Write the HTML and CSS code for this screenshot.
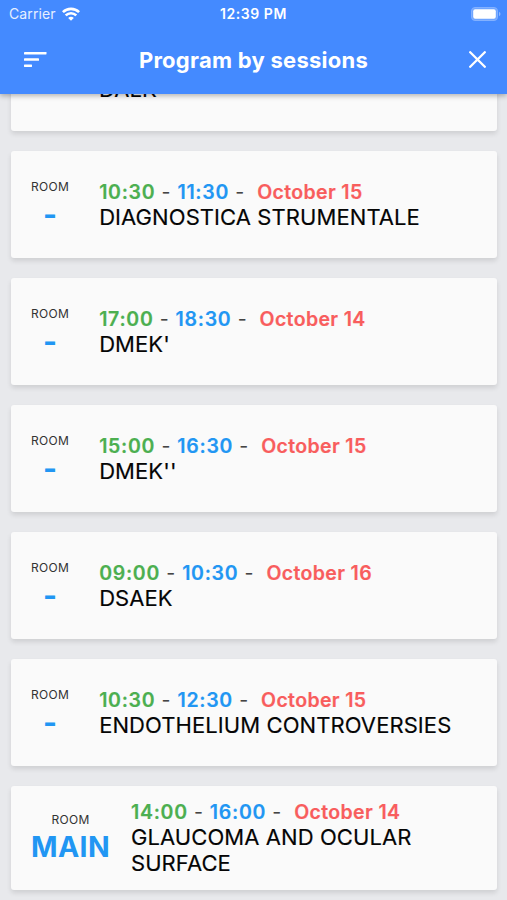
FILE: index.html
```html
<!DOCTYPE html>
<html lang="en">
<head>
<meta charset="utf-8">
<title>Program by sessions</title>
<link rel="stylesheet" href="styles.css">
</head>
<body>
<header class="header">
  <div class="status">
    <div class="carrier"><span>Carrier</span>
      <svg class="wifi" width="18" height="14" viewBox="0 0 18 14" fill="none" stroke="#fff" stroke-width="2.600"><path d="M.9 5.200C5.400.7 12.600.7 17.100 5.200M3.700 8.400C6.700 5.500 11.300 5.500 14.300 8.400"/><path d="M9 13.700 6.200 10.900C7.800 9.400 10.200 9.400 11.800 10.900Z" fill="#fff" stroke="none"/></svg>
    </div>
    <span class="clock">12:39 PM</span>
    <svg class="battery" width="30" height="14" viewBox="0 0 30 14"><rect x=".5" y=".5" width="26" height="13" rx="3.500" fill="#6fa5ff" stroke="#83b1ff"/><rect x="2.200" y="2.200" width="22.600" height="9.600" rx="2" fill="#fff"/><path d="M28 4.800v4.400q1.500-.7 1.500-2.200t-1.500-2.200" fill="#8fb8ff"/></svg>
  </div>
  <div class="toolbar">
    <svg class="sort" width="23" height="16" viewBox="0 0 23 16" fill="#fff"><rect width="22.500" height="2.500" rx=".4"/><rect y="6.300" width="15" height="2.500" rx=".4"/><rect y="12.500" width="8" height="2.500" rx=".4"/></svg>
    <h1 class="title">Program by sessions</h1>
    <svg class="close" width="17" height="17" viewBox="0 0 17 17" stroke="#fff" stroke-width="2.300" stroke-linecap="round"><path d="M1.200 1.200 15.800 15.800M15.800 1.200 1.200 15.800"/></svg>
  </div>
</header>
<main class="list">
  <article class="card clipped">
    <div class="info"><div class="session">DALK</div></div>
  </article>
  <article class="card">
    <div class="room"><span class="label">ROOM</span><span class="name">-</span></div>
    <div class="info"><div class="when"><b class="start">10:30</b> - <b class="end">11:30</b> - <b class="date">October 15</b></div><div class="session">DIAGNOSTICA STRUMENTALE</div></div>
  </article>
  <article class="card">
    <div class="room"><span class="label">ROOM</span><span class="name">-</span></div>
    <div class="info"><div class="when"><b class="start">17:00</b> - <b class="end">18:30</b> - <b class="date">October 14</b></div><div class="session">DMEK'</div></div>
  </article>
  <article class="card">
    <div class="room"><span class="label">ROOM</span><span class="name">-</span></div>
    <div class="info"><div class="when"><b class="start">15:00</b> - <b class="end">16:30</b> - <b class="date">October 15</b></div><div class="session">DMEK''</div></div>
  </article>
  <article class="card">
    <div class="room"><span class="label">ROOM</span><span class="name">-</span></div>
    <div class="info"><div class="when"><b class="start">09:00</b> - <b class="end">10:30</b> - <b class="date">October 16</b></div><div class="session">DSAEK</div></div>
  </article>
  <article class="card">
    <div class="room"><span class="label">ROOM</span><span class="name">-</span></div>
    <div class="info"><div class="when"><b class="start">10:30</b> - <b class="end">12:30</b> - <b class="date">October 15</b></div><div class="session">ENDOTHELIUM CONTROVERSIES</div></div>
  </article>
  <article class="card tall">
    <div class="room"><span class="label">ROOM</span><span class="name">MAIN</span></div>
    <div class="info"><div class="when"><b class="start">14:00</b> - <b class="end">16:00</b> - <b class="date">October 14</b></div><div class="session">GLAUCOMA AND OCULAR SURFACE</div></div>
  </article>
</main>
</body>
</html>
```
FILE: styles.css
```css
* { box-sizing: border-box; }
body {
  margin: 0;
  height: 900px;
  overflow: hidden;
  background: #e8e9ec;
  font-family: Inter, "Liberation Sans", sans-serif;
}
.header {
  position: relative;
  z-index: 1;
  height: 94px;
  background: #448aff;
  color: #fff;
  box-shadow: 0 2px 5px rgba(0, 0, 0, .28);
}
.status {
  display: grid;
  grid-template-columns: 1fr auto 1fr;
  align-items: center;
  height: 27px;
  padding: 0 6px;
  font-size: 14px;
}
.carrier { display: flex; align-items: center; gap: 6px; padding-left: 3px; color: #e6efff; letter-spacing: .1px; }
.clock { font-weight: 600; font-size: 14px; letter-spacing: .55px; }
.battery { justify-self: end; }
.toolbar {
  display: grid;
  grid-template-columns: 60px 1fr 60px;
  align-items: center;
  height: 66px;
}
.sort { margin-left: 24px; }
.title { margin: 0; text-align: center; font-size: 22px; font-weight: 700; line-height: 30px; letter-spacing: .26px; }
.close { justify-self: end; margin: 0 21px 1px 0; }
.list {
  display: flex;
  flex-direction: column;
  gap: 20px;
  margin-top: -17px;
  padding: 0 10px 0 11px;
}
.card {
  display: flex;
  align-items: center;
  flex: none;
  height: 107px;
  padding: 2px 20px 0;
  border-radius: 3px;
  background: #fafafa;
  box-shadow: 0 3px 5px rgba(0, 0, 0, .11);
}
.card.clipped { height: 54px; align-items: flex-start; padding: 0 20px 0 88px; }
.card.tall { height: 104px; padding-top: 0; }
.room { display: flex; flex-direction: column; align-items: center; margin-right: 30px; }
.tall .room { margin-right: 21px; padding-top: 2px; }
.label { font-size: 12px; line-height: 16px; letter-spacing: .3px; color: #333; }
.name { font-size: 30px; line-height: 38px; font-weight: 700; color: #2196f3; }
.tall .name { font-size: 28.500px; letter-spacing: .35px; }
.info { flex: 1; }
.when { font-size: 19.500px; line-height: 25px; letter-spacing: .72px; color: #444; white-space: nowrap; }
.when b { font-weight: 600; -webkit-text-stroke: .2px currentColor; }
.when .date { margin-left: 6px; color: #f85d5d; letter-spacing: .36px; }
.start { color: #4caf50; }
.end { color: #2196f3; }
.session { max-width: 370px; font-size: 22px; line-height: 25.500px; letter-spacing: .08px; color: #050505; -webkit-text-stroke: .15px #050505; }
.tall .session { max-width: 320px; }
```
